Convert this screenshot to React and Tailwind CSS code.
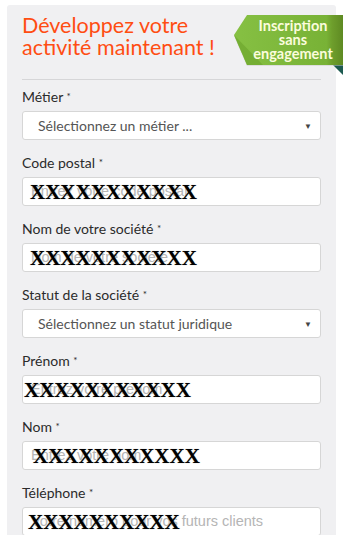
import React from "react";

const font = { fontFamily: "Lato, 'Open Sans', sans-serif" };

function Label({ children }) {
  return (
    <div className="h-[20px] leading-[20px] text-[14px] text-[#2b2b2b] mb-[4px]" style={font}>
      {children} <span className="text-[10px] align-top relative top-[-1px]">*</span>
    </div>
  );
}

function Select({ text }) {
  return (
    <div className="h-[29px] w-[299px] bg-white border border-[#d6d6d6] rounded-[3px] flex items-center justify-between pl-[15px] pr-[8px] mb-[13px]">
      <span className="text-[14px] text-[#555]" style={font}>{text}</span>
      <span className="text-[8px] text-[#444]">▼</span>
    </div>
  );
}

function Input({ placeholder, xs, offset }) {
  return (
    <div className="relative h-[29px] w-[299px] bg-white border border-[#d6d6d6] rounded-[3px] flex items-center pl-[8px] mb-[13px] overflow-hidden">
      <span className="text-[14.5px] text-[#b5b5b5]" style={{ fontFamily: "'Liberation Sans', Arial, sans-serif" }}>{placeholder}</span>
      <span
        className="absolute top-[2px] text-[21px] leading-[24px] font-bold text-black"
        style={{ left: offset, fontFamily: "'Liberation Serif', serif", textShadow: "0 0 1px #999" }}
      >
        {xs}
      </span>
    </div>
  );
}

export default function App() {
  return (
    <div className="w-[343px] h-[535px] bg-white overflow-hidden relative">
      <div className="ml-[7px] mt-[5px] w-[329px] h-[600px] bg-[#f0f0f2] rounded-t-[3px] pl-[15px] pr-[15px] pt-[9px]">
        <div className="text-[21.5px] leading-[22px] text-[#ff4d12] w-[215px]" style={font}>
          Développez votre activité maintenant !
        </div>
        <div className="h-px bg-[#d6d6d8] mt-[21px] mb-[7px]" />
        <Label>Métier</Label>
        <Select text="Sélectionnez un métier ..." />
        <Label>Code postal</Label>
        <Input placeholder="Entrez votre code postal" xs="XXXXXXXXXXX" offset="7px" />
        <Label>Nom de votre société</Label>
        <Input placeholder="Nom de votre société" xs="XXXXXXXXXXX" offset="7px" />
        <Label>Statut de la société</Label>
        <Select text="Sélectionnez un statut juridique" />
        <Label>Prénom</Label>
        <Input placeholder="Entrez votre prénom" xs="XXXXXXXXXXX" offset="1px" />
        <Label>Nom</Label>
        <Input placeholder="Entrez votre nom" xs="XXXXXXXXXXX" offset="10px" />
        <Label>Téléphone</Label>
        <Input placeholder="Votre numéro pour vos futurs clients" xs="XXXXXXXXXX" offset="5px" />
      </div>

      {/* Ribbon */}
      <div className="absolute left-[233px] top-[15px] w-[110px] h-[62px]">
        <svg width="110" height="62" viewBox="0 0 110 62" className="absolute inset-0">
          <defs>
            <linearGradient id="rg" x1="0" x2="1" y1="0" y2="0">
              <stop offset="0" stopColor="#86c043" />
              <stop offset="0.85" stopColor="#78b236" />
              <stop offset="0.9" stopColor="#6e9e2c" />
              <stop offset="1" stopColor="#5e8a22" />
            </linearGradient>
          </defs>
          <polygon points="100,47 110,47 110,60 100,50" fill="#1d5a50" />
          <polygon points="14,1 110,1 110,51 14,51 1,21" fill="#c9c9c9" opacity="0.5" />
          <polygon points="14,0 110,0 110,50 14,50 1,20" fill="url(#rg)" />
          <polygon points="1,20 14,50 30,50" fill="#6aa32c" opacity="0.6" />
        </svg>
        <div
          className="absolute left-[12px] top-[4px] w-[96px] text-center text-[14.5px] leading-[14px] font-bold text-[#fbfcdc]"
          style={font}
        >
          Inscription
          <br />
          sans
          <br />
          engagement
        </div>
      </div>
    </div>
  );
}
